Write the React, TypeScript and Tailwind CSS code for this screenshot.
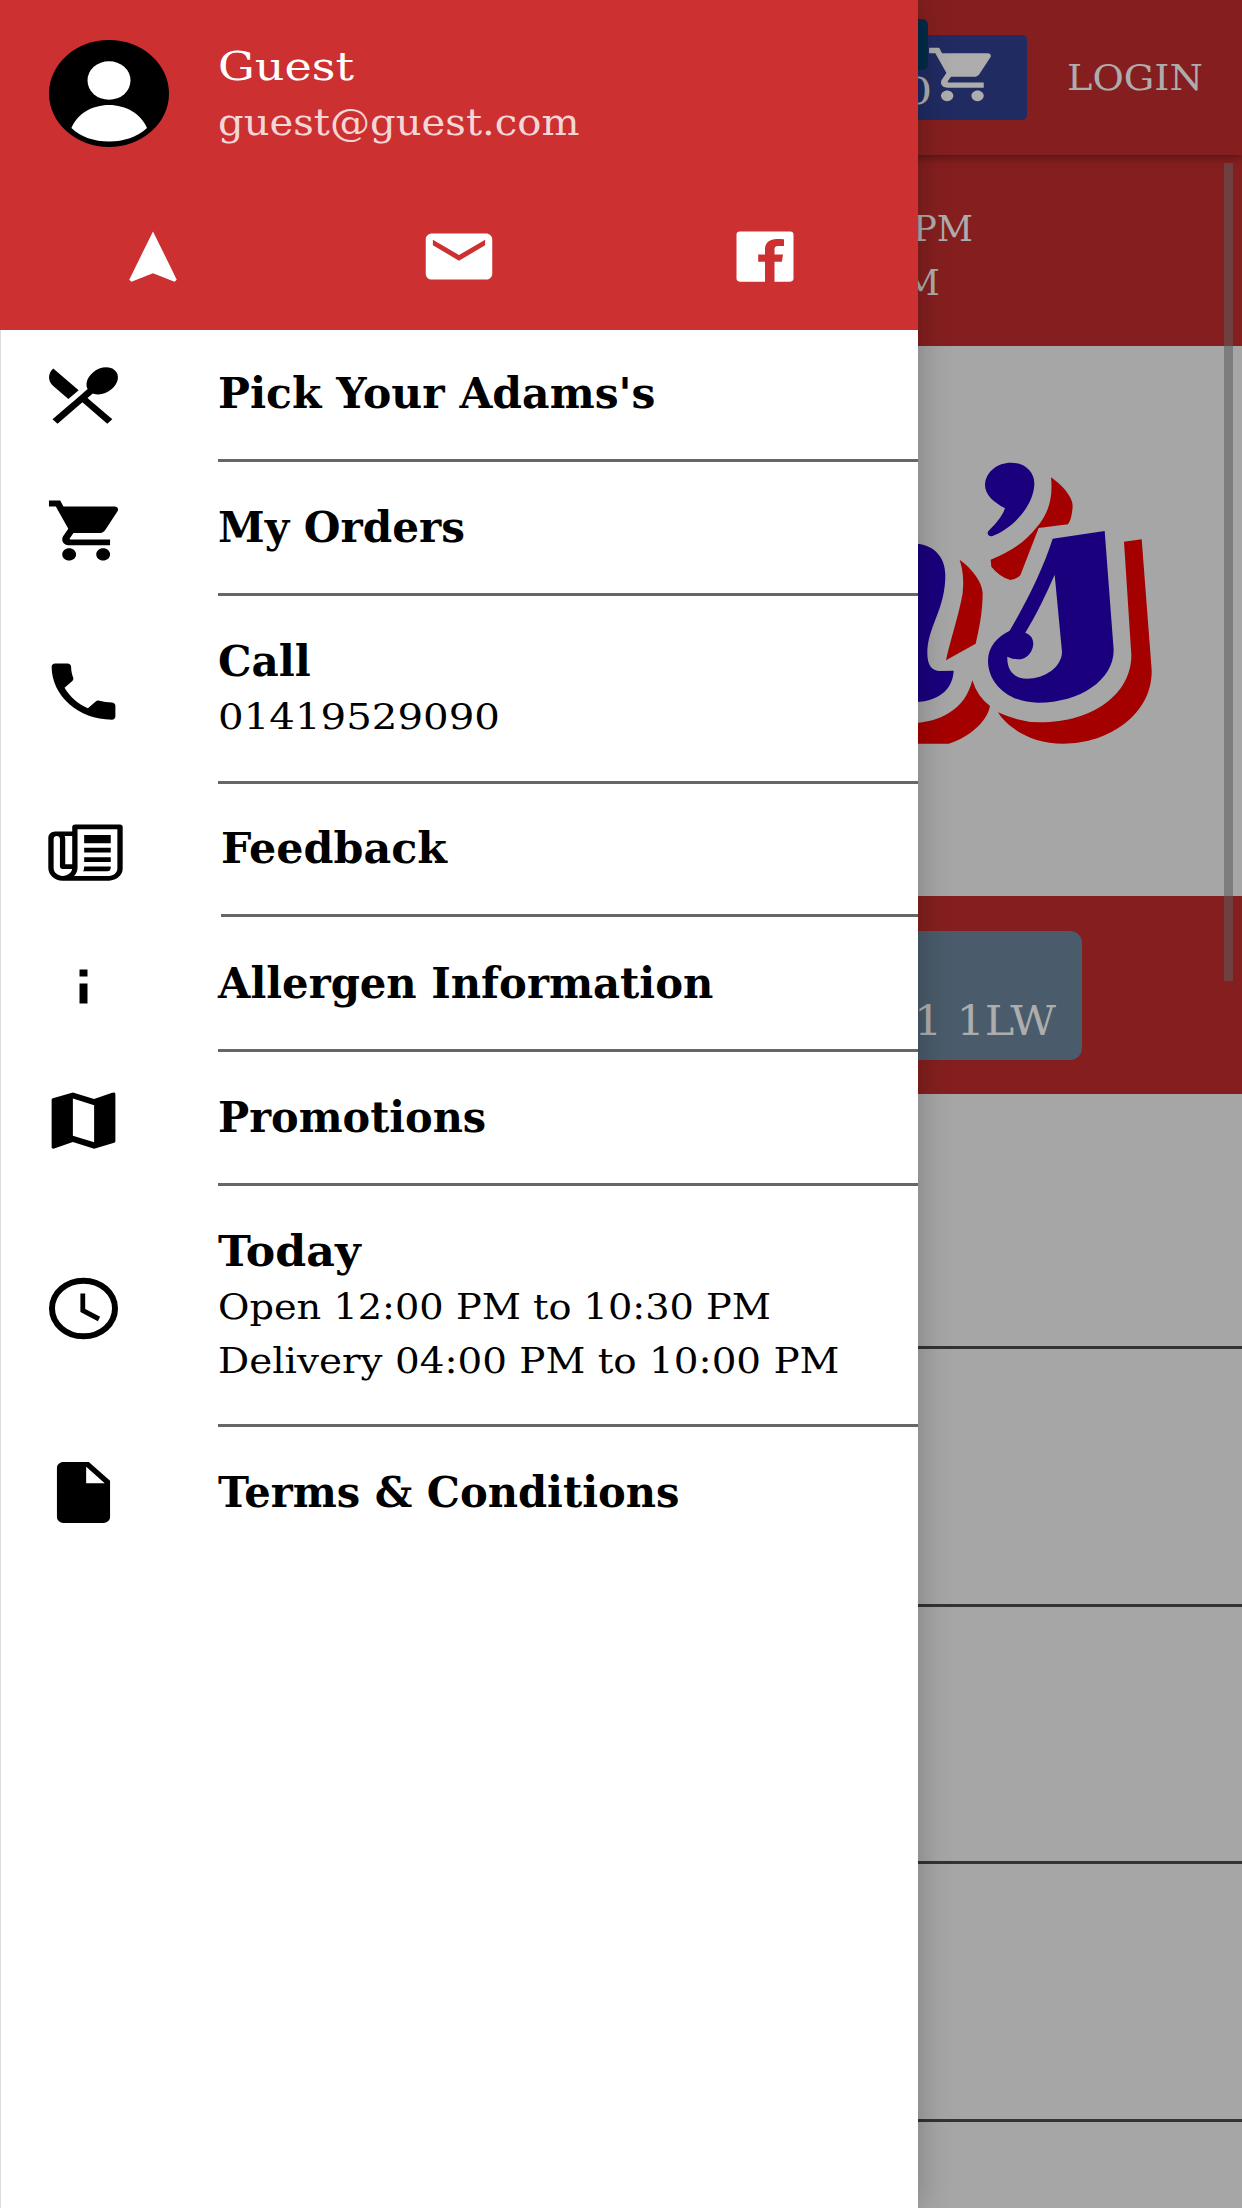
import { useLayoutEffect, useRef, useState } from "react";
import type { ComponentType, ReactNode } from "react";
import {
  IoLogoFacebook,
  IoMdCall,
  IoMdCart,
  IoMdDocument,
  IoMdInformation,
  IoMdMail,
  IoMdMap,
  IoMdNavigate,
  IoMdPaper,
  IoMdRestaurant,
} from "react-icons/io";

interface FitTextProps {
  width: number;
  className?: string;
  children: ReactNode;
}

// Stretches or squeezes one line of text to a given width
function FitText({ width, className = "", children }: FitTextProps) {
  const ref = useRef<HTMLSpanElement>(null);
  const [scale, setScale] = useState(1);

  useLayoutEffect(() => {
    if (ref.current) setScale(width / ref.current.offsetWidth);
  }, [width]);

  return (
    <span className={`block ${className}`} style={{ width }}>
      <span
        ref={ref}
        className="inline-block origin-left whitespace-nowrap"
        style={{ transform: `scaleX(${scale})` }}
      >
        {children}
      </span>
    </span>
  );
}

interface IconProps {
  className?: string;
  preserveAspectRatio?: string;
}

function ClockIcon({ className }: IconProps) {
  return (
    <svg
      className={className}
      viewBox="0 0 85 75"
      preserveAspectRatio="none"
      fill="none"
      stroke="currentColor"
    >
      <ellipse cx="42.500" cy="37.500" rx="31.500" ry="27.800" strokeWidth="6" />
      <path d="M41.800 22.500V39.500L58 48" strokeWidth="4.800" />
    </svg>
  );
}

interface MenuItem {
  title: string;
  width: number;
  icon: ComponentType<IconProps>;
  height: string;
  indent?: string;
  iconPad?: string;
  lines?: { text: string; width: number }[];
}

const MENU: MenuItem[] = [
  {
    title: "Pick Your Adams's",
    width: 438,
    icon: IoMdRestaurant,
    height: "h-[131.5px]",
    iconPad: "pl-[40px]",
  },
  { title: "My Orders", width: 247, icon: IoMdCart, height: "h-[134px]" },
  {
    title: "Call",
    width: 93,
    icon: IoMdCall,
    height: "h-[188px]",
    lines: [{ text: "01419529090", width: 282 }],
  },
  {
    title: "Feedback",
    width: 226,
    icon: IoMdPaper,
    height: "h-[133.5px]",
    indent: "ml-[3px]",
    iconPad: "pl-[42px] pt-[4px]",
  },
  { title: "Allergen Information", width: 495, icon: IoMdInformation, height: "h-[134.5px]" },
  { title: "Promotions", width: 268, icon: IoMdMap, height: "h-[134px]" },
  {
    title: "Today",
    width: 143,
    icon: ClockIcon,
    height: "h-[241.5px]",
    lines: [
      { text: "Open 12:00 PM to 10:30 PM", width: 553 },
      { text: "Delivery 04:00 PM to 10:00 PM", width: 621 },
    ],
  },
  {
    title: "Terms & Conditions",
    width: 461,
    icon: IoMdDocument,
    height: "h-[134px]",
    iconPad: "pl-[40px] pb-[3px]",
  },
];

function Avatar() {
  return (
    <svg className="w-[120px] h-[107px]" viewBox="0 0 120 107" preserveAspectRatio="none">
      <ellipse cx="60" cy="53.5" rx="60" ry="53.5" fill="#000" />
      <ellipse cx="60" cy="40.5" rx="21.5" ry="19.3" fill="#fff" />
      <path d="M22.400 88C28 74 43 65 60 65s32 9 38 23C88 97 75 101.500 60 101.500S32 97 22.400 88z" fill="#fff" />
    </svg>
  );
}

function BrandLogo() {
  return (
    <svg className="w-[260px] h-[300px]" viewBox="0 0 780 900">
      <g fill="#a50000">
        <path d="M423 82C455 104 488 140 488 168Q486 206 474 223L386 234L331 376Q318 388 301 390Q268 380 244 350L242 329C300 305 345 278 380 232C412 195 430 150 423 82z" />
        <path d="M149 329C185 355 217 395 218 430C218 485 207 540 197 581L108 631C120 575 148 490 158 430Q164 375 149 329z" />
        <path d="M0 820C90 818 165 780 187 691Q202 740 240 768C230 820 170 865 116 881H0z" />
        <path d="M642 275L695 268L725 660C728 790 600 881 460 881C360 881 290 830 264 787Q330 817 390 817C550 817 665 730 664 615z" />
      </g>
      <g fill="#1a007d">
        <path d="M303 38C345 38 373 66 373 100C373 165 310 235 246 259Q232 260 233 246C250 228 275 205 285 175C250 155 225 135 225 104C227 65 262 38 303 38z" />
        <path d="M0 281C65 278 105 315 106 375C106 480 52 530 52 610C52 645 65 663 90 663L131 662C128 720 85 757 0 757z" />
        <path
          fillRule="evenodd"
          d="M428 266L584 243L611 600C611 690 510 758 385 758C295 758 234 700 234 632C234 590 262 560 299 542C350 455 400 355 428 266zM434 374C405 440 380 492 346 548Q369 556 370 581C368 612 345 628 325 628Q307 628 292 620C290 660 312 686 350 686C405 686 456 650 456 605z"
        />
      </g>
    </svg>
  );
}

// The ordering page, already dimmed by the open drawer
function OrderPage() {
  return (
    <div className="flex flex-col w-full h-full bg-[#a6a6a6] text-[#adadad]">
      <header className="relative z-10 flex shrink-0 h-[155px] bg-[#851f1f] pl-[840px] shadow-[0_3px_8px_rgba(0,0,0,0.35)]">
        <div className="relative flex mt-[35px] w-[187px] h-[85px] rounded-[5px] bg-[#202b62]">
          <FitText width={28} className="ml-[64px] mt-[29px] text-[38px] leading-[54px]">
            0
          </FitText>
          <IoMdCart
            className="-ml-[10px] mt-[6px] w-[76px] h-[67px] shrink-0"
            preserveAspectRatio="none"
          />
          <div className="absolute right-[99px] -top-[16px] w-[50px] h-[51px] rounded-[6px] bg-[#032c48]" />
        </div>
        <FitText width={136} className="ml-[40px] mt-[51px] text-[36px] leading-[54px]">
          LOGIN
        </FitText>
      </header>

      <section className="flex flex-col shrink-0 h-[191px] bg-[#851f1f] pt-[47px] text-[36px] leading-[53.5px]">
        <FitText width={60} className="ml-[913px]">
          PM
        </FitText>
        <FitText width={37} className="ml-[903px]">
          M
        </FitText>
      </section>

      <section className="flex shrink-0 justify-end h-[550px] pt-[104px] pr-[72px]">
        <BrandLogo />
      </section>

      <section className="flex shrink-0 h-[198px] bg-[#851f1f] pt-[35px] pl-[840px]">
        <div className="flex w-[242px] h-[129px] rounded-[12px] bg-[#4a5b6b]">
          <FitText width={142} className="ml-[74px] mt-[63px] text-[41px] leading-[54px]">
            1 1LW
          </FitText>
        </div>
      </section>

      <div className="shrink-0 h-[255px] border-b-[3px] border-[#333]" />
      <div className="shrink-0 h-[257.5px] border-b-[3px] border-[#333]" />
      <div className="shrink-0 h-[257.5px] border-b-[3px] border-[#333]" />
      <div className="shrink-0 h-[257.5px] border-b-[3px] border-[#333]" />
    </div>
  );
}

function MenuRow({ item, last }: { item: MenuItem; last: boolean }) {
  const Icon = item.icon;
  return (
    <li className={`flex ${item.height}`}>
      <div className={`flex items-center w-[217px] ${item.iconPad ?? "pl-[40px] pt-[4px]"}`}>
        <Icon className="w-[85px] h-[75px]" preserveAspectRatio="none" />
      </div>
      <div
        className={`flex flex-col flex-1 justify-end pb-[38px] ${item.indent ?? ""} ${
          last ? "mb-[3px]" : "border-b-[3px] border-[#666]"
        }`}
      >
        <FitText
          width={item.width}
          className="relative -top-[2px] font-bold text-[43px] leading-[52px]"
        >
          {item.title}
        </FitText>
        {item.lines?.map((line) => (
          <FitText
            key={line.text}
            width={line.width}
            className="relative top-px text-[36px] leading-[53.5px]"
          >
            {line.text}
          </FitText>
        ))}
      </div>
    </li>
  );
}

function Drawer() {
  return (
    <aside className="absolute inset-y-0 left-0 z-20 w-[918px] bg-white text-black shadow-[0_0_32px_rgba(0,0,0,0.25)]">
      <div className="flex flex-col h-[330px] bg-[#cc3031] text-white">
        <div className="flex pt-[40px] pl-[49px]">
          <Avatar />
          <div className="ml-[49px]">
            <FitText width={136} className="text-[39px] leading-[54px]">
              Guest
            </FitText>
            <FitText width={361} className="mt-[2px] text-[37px] leading-[54px] text-[#f3d6d6]">
              guest@guest.com
            </FitText>
          </div>
        </div>
        <div className="grid grid-cols-3 justify-items-center mt-[73px]">
          <IoMdNavigate className="w-[76px] h-[67px]" preserveAspectRatio="none" />
          <IoMdMail className="w-[76px] h-[67px]" preserveAspectRatio="none" />
          <IoLogoFacebook className="w-[76px] h-[67px]" preserveAspectRatio="none" />
        </div>
      </div>
      <ul className="border-l border-[#ddd] h-[1878px]">
        {MENU.map((item, i) => (
          <MenuRow key={item.title} item={item} last={i === MENU.length - 1} />
        ))}
      </ul>
    </aside>
  );
}

export default function App() {
  return (
    <div className="relative w-[1242px] h-[2208px] overflow-hidden font-['DejaVu_Serif',serif]">
      <OrderPage />
      {/* Scroll thumb */}
      <div className="absolute top-[163px] right-[9px] z-10 w-[9px] h-[818px] bg-[#5b5b5b]/55" />
      <Drawer />
    </div>
  );
}
